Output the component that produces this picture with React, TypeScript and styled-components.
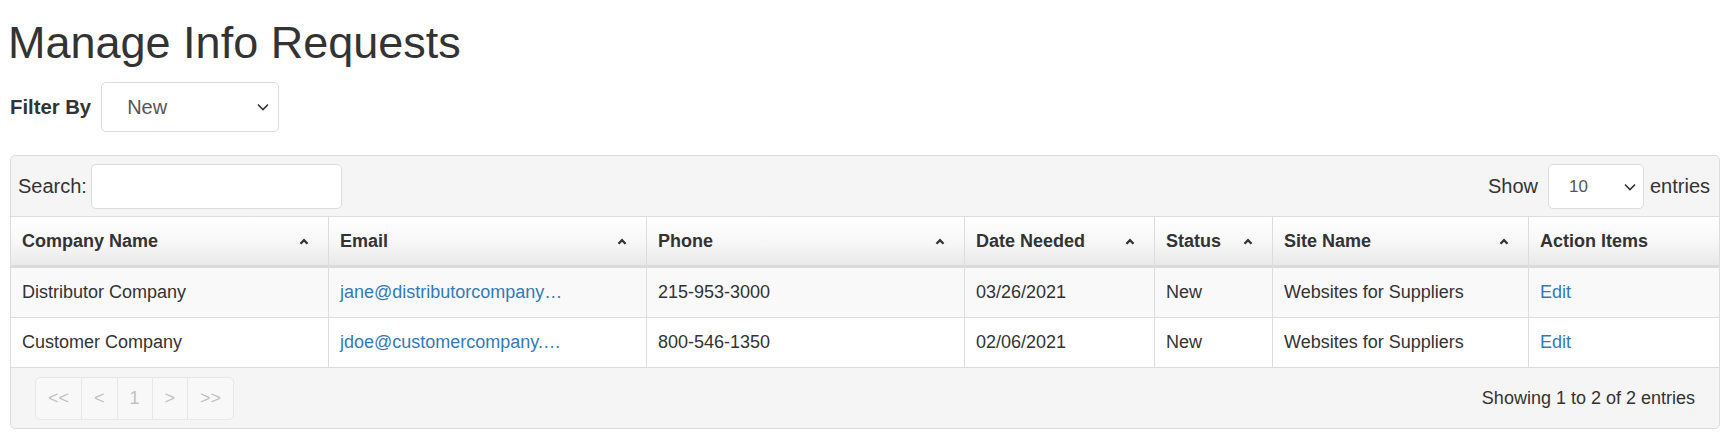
import React from 'react';
import styled, { createGlobalStyle } from 'styled-components';

const GlobalStyle = createGlobalStyle`
  html, body { margin: 0; padding: 0; background: #fff; }
  body { font-family: "Liberation Sans", Arial, Helvetica, sans-serif; color: #333; }
  * { box-sizing: border-box; }
`;

const Page = styled.div`
  padding: 18px 8px 0 10px;
`;

const Title = styled.h1`
  margin: 0 0 0 -2px;
  font-size: 45px;
  line-height: 50px;
  font-weight: 400;
  color: #333;
`;

const FilterRow = styled.div`
  display: flex;
  align-items: center;
  gap: 10px;
  margin-top: 14px;
  height: 50px;
`;

const FilterLabel = styled.label`
  font-size: 20.3px;
  font-weight: 700;
  color: #333;
`;

const SelectWrap = styled.div<{ $w: number; $h: number }>`
  position: relative;
  width: ${(p) => p.$w}px;
  height: ${(p) => p.$h}px;
`;

const Select = styled.select<{ $pl: number; $fs: number }>`
  appearance: none;
  -webkit-appearance: none;
  width: 100%;
  height: 100%;
  border: 1px solid #dcdcdc;
  border-radius: 5px;
  background: #fff;
  padding: 0 0 0 ${(p) => p.$pl}px;
  font-family: "Liberation Sans", Arial, sans-serif;
  font-size: ${(p) => p.$fs}px;
  color: #555;
  outline: none;
`;

const Chevron = styled.svg<{ $r: number }>`
  position: absolute;
  right: ${(p) => p.$r}px;
  top: 50%;
  transform: translateY(-50%);
  pointer-events: none;
`;

const Panel = styled.div`
  margin-top: 23px;
  border: 1px solid #ddd;
  border-radius: 5px;
  background: #f5f5f5;
  overflow: hidden;
`;

const Toolbar = styled.div`
  display: flex;
  justify-content: space-between;
  align-items: center;
  padding: 8px 9px 7px 7px;
  border-bottom: 1px solid #ddd;
`;

const ToolGroup = styled.div<{ $gap: number }>`
  display: flex;
  align-items: center;
  gap: ${(p) => p.$gap}px;
  font-size: 20px;
  color: #333;
`;

const SearchInput = styled.input`
  width: 251px;
  height: 45px;
  border: 1px solid #dcdcdc;
  border-radius: 5px;
  background: #fff;
  outline: none;
  font-size: 18px;
  font-family: "Liberation Sans", Arial, sans-serif;
`;

const Table = styled.table`
  width: 100%;
  border-collapse: separate;
  border-spacing: 0;
  table-layout: fixed;
  font-size: 18px;
`;

const Th = styled.th`
  height: 51px;
  padding: 0 19px 0 11px;
  text-align: left;
  font-weight: 700;
  color: #333;
  vertical-align: middle;
  background: linear-gradient(to bottom, #ffffff 0%, #f7f7f7 55%, #e9e9e9 100%);
  border-right: 1px solid #ddd;
  border-bottom: 3px solid #dadada;
  &:last-child { border-right: none; }
`;

const ThInner = styled.div`
  display: flex;
  justify-content: space-between;
  align-items: center;
`;

const Row = styled.tr<{ $striped: boolean }>`
  background: ${(p) => (p.$striped ? '#f9f9f9' : '#fff')};
`;

const Td = styled.td`
  height: 50px;
  padding: 0 11px;
  vertical-align: middle;
  color: #333;
  border-right: 1px solid #ddd;
  border-bottom: 1px solid #ddd;
  white-space: nowrap;
  overflow: hidden;
  &:last-child { border-right: none; }
`;

const Link = styled.a`
  color: #337ab7;
  text-decoration: none;
`;

const Footer = styled.div`
  display: flex;
  justify-content: space-between;
  align-items: center;
  padding: 9px 24px 8px 24px;
`;

const Pager = styled.div`
  display: inline-flex;
  height: 43px;
  border: 1px solid #e7e7e7;
  border-radius: 5px;
  background: #f8f8f8;
  overflow: hidden;
`;

const PageBtn = styled.span`
  display: flex;
  align-items: center;
  justify-content: center;
  padding: 0 12px;
  font-size: 18px;
  color: #c2c2c2;
  & + & { border-left: 1px solid #e7e7e7; }
`;

const Info = styled.div`
  font-size: 18px;
  color: #333;
`;

const SortIcon = () => (
  <svg width="10" height="7" viewBox="0 0 10 7">
    <path d="M1.5 5.8 L5 2.2 L8.5 5.8" fill="none" stroke="#333" strokeWidth="2.3" strokeLinecap="butt" strokeLinejoin="miter" />
  </svg>
);

const SelectChevron = ({ r }: { r: number }) => (
  <Chevron $r={r} width="12" height="8" viewBox="0 0 12 8">
    <path d="M1 1.5 L6 6.5 L11 1.5" fill="none" stroke="#333" strokeWidth="1.6" />
  </Chevron>
);

const columns = [
  { label: 'Company Name', width: 318, sort: true },
  { label: 'Email', width: 318, sort: true },
  { label: 'Phone', width: 318, sort: true },
  { label: 'Date Needed', width: 190, sort: true },
  { label: 'Status', width: 118, sort: true },
  { label: 'Site Name', width: 256, sort: true },
  { label: 'Action Items', width: 190, sort: false },
];

const rows = [
  {
    company: 'Distributor Company',
    email: 'jane@distributorcompany…',
    phone: '215-953-3000',
    date: '03/26/2021',
    status: 'New',
    site: 'Websites for Suppliers',
  },
  {
    company: 'Customer Company',
    email: 'jdoe@customercompany.…',
    phone: '800-546-1350',
    date: '02/06/2021',
    status: 'New',
    site: 'Websites for Suppliers',
  },
];

export default function App() {
  return (
    <>
      <GlobalStyle />
      <Page>
        <Title>Manage Info Requests</Title>
        <FilterRow>
          <FilterLabel>Filter By</FilterLabel>
          <SelectWrap $w={178} $h={50}>
            <Select $pl={25} $fs={20} defaultValue="New">
              <option>New</option>
              <option>All</option>
            </Select>
            <SelectChevron r={10} />
          </SelectWrap>
        </FilterRow>
        <Panel>
          <Toolbar>
            <ToolGroup $gap={4}>
              <span>Search:</span>
              <SearchInput type="text" />
            </ToolGroup>
            <ToolGroup $gap={0}>
              <span style={{ marginRight: 10 }}>Show</span>
              <SelectWrap $w={96} $h={45}>
                <Select $pl={20} $fs={17} defaultValue="10">
                  <option>10</option>
                  <option>25</option>
                  <option>50</option>
                </Select>
                <SelectChevron r={8} />
              </SelectWrap>
              <span style={{ marginLeft: 6 }}>entries</span>
            </ToolGroup>
          </Toolbar>
          <Table>
            <colgroup>
              {columns.map((c) => (
                <col key={c.label} style={{ width: c.width }} />
              ))}
            </colgroup>
            <thead>
              <tr>
                {columns.map((c) => (
                  <Th key={c.label}>
                    <ThInner>
                      <span>{c.label}</span>
                      {c.sort && <SortIcon />}
                    </ThInner>
                  </Th>
                ))}
              </tr>
            </thead>
            <tbody>
              {rows.map((r, i) => (
                <Row key={r.company} $striped={i % 2 === 0}>
                  <Td>{r.company}</Td>
                  <Td>
                    <Link href="#">{r.email}</Link>
                  </Td>
                  <Td>{r.phone}</Td>
                  <Td>{r.date}</Td>
                  <Td>{r.status}</Td>
                  <Td>{r.site}</Td>
                  <Td>
                    <Link href="#">Edit</Link>
                  </Td>
                </Row>
              ))}
            </tbody>
          </Table>
          <Footer>
            <Pager>
              <PageBtn>&lt;&lt;</PageBtn>
              <PageBtn>&lt;</PageBtn>
              <PageBtn>1</PageBtn>
              <PageBtn>&gt;</PageBtn>
              <PageBtn>&gt;&gt;</PageBtn>
            </Pager>
            <Info>Showing 1 to 2 of 2 entries</Info>
          </Footer>
        </Panel>
      </Page>
    </>
  );
}
